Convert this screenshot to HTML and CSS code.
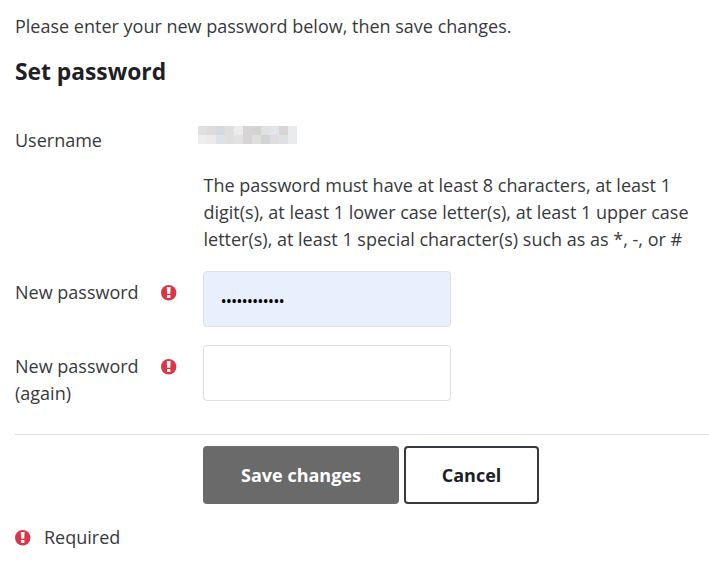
FILE: index.html
```html
<!DOCTYPE html>
<html lang="en">
<head>
    <meta charset="UTF-8">
    <meta name="viewport" content="width=device-width, initial-scale=1.0">
    <title>Set password</title>
    <link rel="stylesheet" href="styles.css">
</head>
<body>
    <svg class="icon-defs" width="0" height="0">
        <symbol id="icon-required" viewBox="0 0 16 16">
            <circle cx="7.7" cy="7.7" r="7.7" fill="#dc3545"/>
            <path d="M5.8 2h3.8l-.3 6.8H6.1zM6 10h3.4v3H6z" fill="#fff"/>
        </symbol>
    </svg>

    <p class="intro">Please enter your new password below, then save changes.</p>

    <form class="password-form">
        <h2>Set password</h2>

        <div class="form-row username-row">
            <div class="label">Username</div>
            <!-- hidden user name, one cell per block -->
            <div class="masked-name">
                <i class="c1"></i><i class="c2"></i><i class="c3"></i><i class="c4"></i><i class="c5"></i><i class="c6"></i><i class="c7"></i><i class="c8"></i><i class="c9"></i><i class="c10"></i><i class="c11"></i>
                <i class="c12"></i><i class="c13"></i><i class="c14"></i><i class="c15"></i><i class="c16"></i><i class="c17"></i><i class="c18"></i><i class="c19"></i><i class="c20"></i><i class="c21"></i><i class="c11"></i>
            </div>
        </div>

        <p class="policy">The password must have at least 8 characters, at least 1 digit(s), at least 1 lower case letter(s), at least 1 upper case letter(s), at least 1 special character(s) such as as *, -, or #</p>

        <div class="form-row">
            <label class="label" for="password1">New password</label>
            <svg class="icon"><use href="#icon-required"/></svg>
            <input class="filled" type="password" id="password1" value="abcdefghijkl">
        </div>

        <div class="form-row">
            <label class="label" for="password2">New password (again)</label>
            <svg class="icon"><use href="#icon-required"/></svg>
            <input type="password" id="password2">
        </div>

        <div class="buttons">
            <button type="submit" class="btn btn-save">Save changes</button>
            <button type="button" class="btn btn-cancel">Cancel</button>
        </div>

        <div class="required-note">
            <svg class="icon"><use href="#icon-required"/></svg>
            <span>Required</span>
        </div>
    </form>
</body>
</html>
```

FILE: styles.css
```css
* {
    margin: 0;
    padding: 0;
    box-sizing: border-box;
}

body {
    padding: 13px 0 0 15px;
    background: #fff;
    color: #373a3c;
    font-family: "Open Sans", sans-serif;
    font-size: 18px;
    line-height: 27px;
    overflow: hidden;
}

.icon-defs {
    display: block;
}

.password-form h2 {
    margin-top: 17px;
    color: #1d2125;
    font-size: 22.8px;
    line-height: 30px;
    font-weight: 700;
}

.form-row {
    display: grid;
    grid-template-columns: 146px 42px 248px;
    align-items: start;
    margin-bottom: 18px;
}

.form-row .label {
    padding-top: 8px;
}

.form-row .icon {
    margin-top: 14px;
}

.icon {
    display: block;
    width: 16px;
    height: 16px;
}

.username-row {
    grid-template-columns: 183px 99px;
    margin-top: 39px;
    margin-bottom: 0;
}

.username-row .label {
    padding-top: 1px;
}

.masked-name {
    display: grid;
    grid-template-columns: repeat(11, 9px);
    grid-auto-rows: 9px;
}

.c1 { background: #e1dfe1; }
.c2 { background: #dedcda; }
.c3 { background: #d5d9e2; }
.c4 { background: #dededf; }
.c5 { background: #ebebeb; }
.c6 { background: #d6d4d5; }
.c7 { background: #d4d3d1; }
.c8 { background: #e1e1e1; }
.c9 { background: #e0e4e8; }
.c10 { background: #d7d5d3; }
.c11 { background: #eaebed; }
.c12 { background: #ededed; }
.c13 { background: #eeeae6; }
.c14 { background: #dde1ea; }
.c15 { background: #dfdfdf; }
.c16 { background: #e2e2e2; }
.c17 { background: #d6d5d3; }
.c18 { background: #dee0df; }
.c19 { background: #d2d3d5; }
.c20 { background: #dddddd; }
.c21 { background: #dfe0e1; }

.policy {
    width: 495px;
    margin: 18px 0 18px 188.5px;
}

input {
    width: 248px;
    height: 56px;
    padding: 2px 17px 0;
    border: 1px solid #dfdfe1;
    border-radius: 4px;
    background: #fff;
    color: #000;
    font-family: "Open Sans", sans-serif;
    font-size: 14px;
}

.filled {
    background: #e8f0fe;
    font-weight: 600;
}

.buttons {
    display: flex;
    gap: 5px;
    margin-top: 27px;
    padding: 11px 0 0 188px;
    border-top: 1px solid #dfdfe1;
}

.btn {
    height: 58px;
    border-radius: 4px;
    font-family: "Open Sans", sans-serif;
    font-size: 18px;
    line-height: 27px;
    font-weight: 700;
}

.btn-save {
    width: 196px;
    border: none;
    background: #6a6a6a;
    color: #fff;
}

.btn-cancel {
    width: 135px;
    border: 2px solid #343a40;
    background: #fff;
    color: #1d2125;
}

.required-note {
    display: flex;
    align-items: center;
    gap: 13px;
    margin-top: 20px;
}
```
